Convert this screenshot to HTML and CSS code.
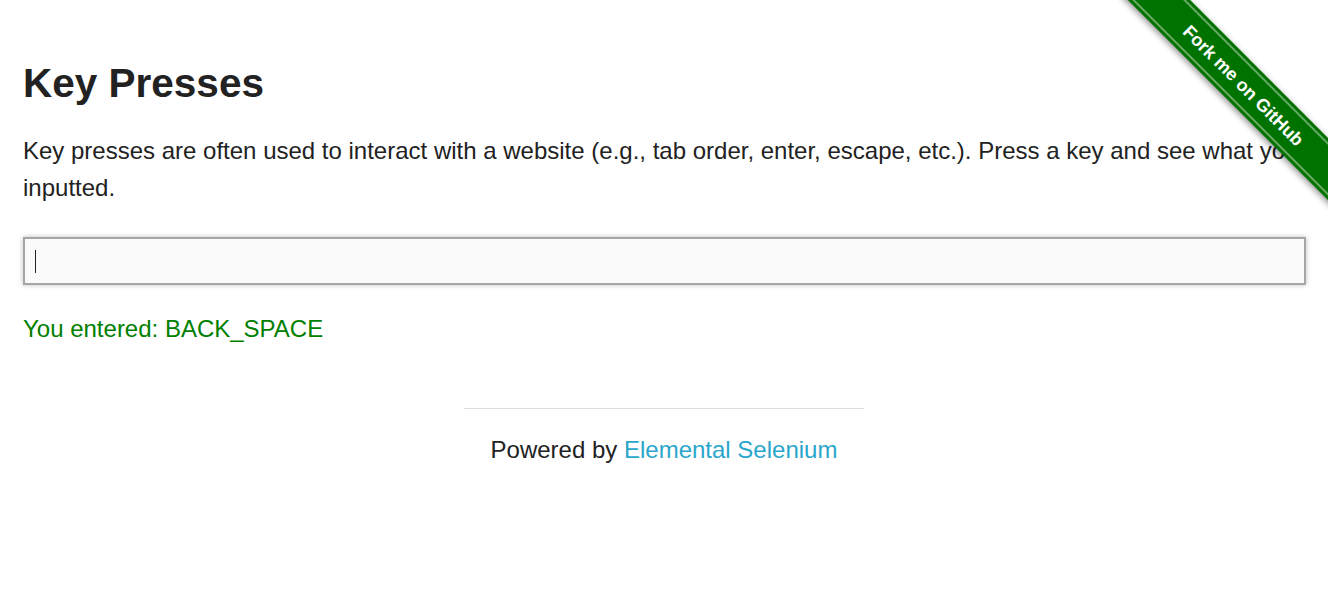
FILE: index.html
```html
<!DOCTYPE html>
<html lang="en">
<head>
<meta charset="utf-8">
<title>The Internet</title>
<link rel="stylesheet" href="styles.css">
</head>
<body>
<a class="ribbon" href="#"><span class="ribbon-band">Fork me on GitHub</span></a>
<main class="content">
  <h3 class="title">Key Presses</h3>
  <p class="intro">Key presses are often used to interact with a website (e.g., tab order, enter, escape, etc.). Press a key and see what you inputted.</p>
  <div class="target"><span class="caret"></span></div>
  <p class="result">You entered: BACK_SPACE</p>
</main>
<footer class="footer">
  <div class="footer-rule"></div>
  <div class="footer-text">Powered by <a class="footer-link" href="#">Elemental Selenium</a></div>
</footer>
</body>
</html>
```
FILE: styles.css
```css
html, body {
  margin: 0;
  padding: 0;
  background: #fff;
}
body {
  font-family: "Liberation Sans", Arial, Helvetica, sans-serif;
  color: #222;
  font-size: 24px;
  position: relative;
  min-height: 599px;
  overflow: hidden;
}
.ribbon {
  position: absolute;
  top: 0;
  right: 0;
  width: 210px;
  height: 210px;
  overflow: hidden;
  text-decoration: none;
}
.ribbon-band {
  position: absolute;
  left: -24.5px;
  top: 62.5px;
  width: 300px;
  height: 44px;
  box-sizing: border-box;
  background: #007200;
  color: #fff;
  font-weight: bold;
  font-size: 18px;
  line-height: 46px;
  text-align: center;
  transform: rotate(45deg);
  box-shadow: 0 2px 6px rgba(0, 0, 0, 0.45);
}
.ribbon-band::before,
.ribbon-band::after {
  content: "";
  position: absolute;
  left: 0;
  right: 0;
  height: 2px;
  background: rgba(255, 255, 255, 0.4);
}
.ribbon-band::before { top: 3px; }
.ribbon-band::after { bottom: 3px; }
.content {
  display: flex;
  flex-direction: column;
  padding: 58px 22px 0 23px;
}
.title {
  margin: 0;
  font-size: 40.5px;
  line-height: 50px;
  font-weight: bold;
  color: #222;
}
.intro {
  margin: 24px 0 0;
  font-size: 24px;
  line-height: 37px;
}
.target {
  margin-top: 31px;
  height: 48px;
  box-sizing: border-box;
  border: 2px solid #a6a6a6;
  background: #fafafa;
  box-shadow: 0 0 5px rgba(0, 0, 0, 0.25);
  display: flex;
  align-items: center;
  padding-left: 10px;
}
.caret {
  width: 1px;
  height: 23px;
  background: #222;
}
.result {
  margin: 25px 0 0;
  color: #008000;
  font-size: 24px;
  line-height: 37px;
}
.footer {
  display: flex;
  flex-direction: column;
  align-items: center;
  margin-top: 61px;
}
.footer-rule {
  width: 400px;
  border-top: 1px solid #ddd;
}
.footer-text {
  margin-top: 22px;
  font-size: 24px;
  line-height: 37px;
}
.footer-link {
  color: #2ba6cb;
  text-decoration: none;
}
```
